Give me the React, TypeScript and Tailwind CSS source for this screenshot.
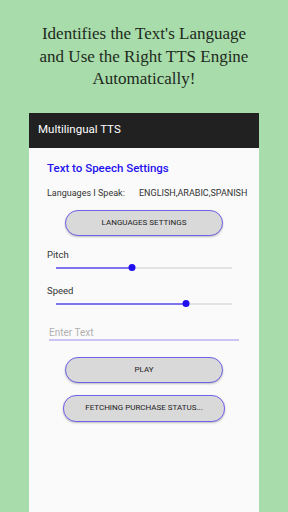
import React from "react";

function PillButton({ label, wide }: { label: string; wide?: boolean }) {
	return (
		<div className="flex justify-center">
			<button
				className={
					wide
						? "w-[162px] h-[27px] rounded-[13px] border border-[#6f62ea] bg-[#d9d9d9] text-[8px] leading-none text-[#222] shadow-[0_1px_2px_rgba(0,0,0,0.25)]"
						: "w-[158px] h-[26px] rounded-[13px] border border-[#6f62ea] bg-[#d9d9d9] text-[8px] leading-none text-[#222] shadow-[0_1px_2px_rgba(0,0,0,0.25)]"
				}>
				{label}
			</button>
		</div>
	);
}

function Slider({ value }: { value: number }) {
	return (
		<div className="relative ml-[9px] w-[176px] h-[8px] flex items-center">
			<div className="w-full h-[2px] bg-[#e3e3e3]" />
			<div
				className="absolute left-0 h-[2px] bg-[#7f74ee]"
				style={{ width: `${value}%` }}
			/>
			<div
				className="absolute w-[7px] h-[7px] rounded-full bg-[#1f0ff0] -translate-x-1/2"
				style={{ left: `${value}%` }}
			/>
		</div>
	);
}

export default function App() {
	return (
		<div className="w-[288px] h-[512px] bg-[#a8dcab] flex flex-col items-center overflow-hidden font-['Roboto',sans-serif]">
			<h1 className="mt-[23px] text-center text-[17px] leading-[22.5px] text-[#1e2a20] font-['Liberation_Serif',serif]">
				Identifies the Text's Language
				<br />
				and Use the Right TTS Engine
				<br />
				Automatically!
			</h1>

			<div className="mt-[22px] w-[230px] flex-1 bg-[#fafafa] flex flex-col">
				<div className="h-[35px] bg-[#212121] flex items-center px-[9px] text-white text-[11.5px]">
					Multilingual TTS
				</div>

				<div className="px-[18px] pt-[13px] flex flex-col">
					<div className="text-[11.5px] leading-[14px] font-medium text-[#2412ee]">
						Text to Speech Settings
					</div>

					<div className="mt-[12px] flex whitespace-nowrap text-[9px] leading-[12px] text-[#333]">
						<span className="w-[92px] shrink-0">Languages I Speak:</span>
						<span>ENGLISH,ARABIC,SPANISH</span>
					</div>

					<div className="mt-[11px]">
						<PillButton label="LANGUAGES SETTINGS" />
					</div>

					<div className="mt-[13px] text-[9.5px] leading-[12px] text-[#333]">Pitch</div>
					<div className="mt-[3px]">
						<Slider value={43} />
					</div>

					<div className="mt-[13px] text-[9.5px] leading-[12px] text-[#333]">Speed</div>
					<div className="mt-[3px]">
						<Slider value={74} />
					</div>

					<div className="mt-[18px] ml-[2px] w-[190px] border-b-2 border-[#c9c4f4] text-[10px] leading-[13px] text-[#b0b0b0]">
						Enter Text
					</div>

					<div className="mt-[16px]">
						<PillButton label="PLAY" />
					</div>

					<div className="mt-[12px]">
						<PillButton label="FETCHING PURCHASE STATUS..." wide />
					</div>
				</div>
			</div>
		</div>
	);
}
